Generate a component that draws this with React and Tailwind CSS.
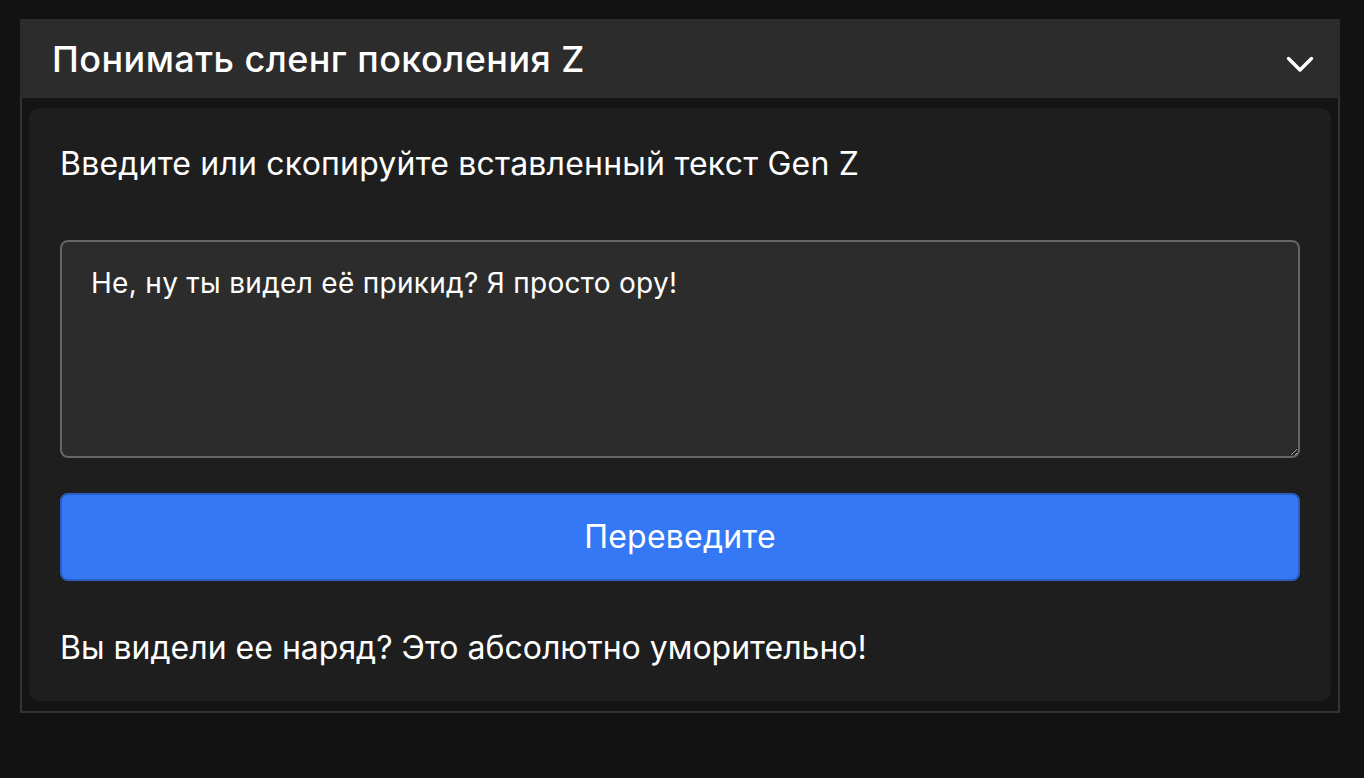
import { useState } from "react"

const font = { fontFamily: "Inter, 'Noto Sans', sans-serif" }

export default function App() {
  const [text, setText] = useState("Не, ну ты видел её прикид? Я просто ору!")

  return (
    <div className="min-h-[778px] bg-[#121212] pt-[19px] px-[20px]" style={font}>
      <div className="w-[1320px] border-2 border-[#333333] border-t-0 bg-[#141414]">
        {/* header */}
        <div className="h-[79px] bg-[#2c2c2c] flex items-center justify-between pl-[32px] pr-[26px] -mx-[2px]">
          <h1 className="text-[36px] font-medium text-white tracking-[0.45px]">
            Понимать сленг поколения Z
          </h1>
          <svg className="mt-[12px]" width="28" height="17" viewBox="0 0 28 17" fill="none" stroke="white" strokeWidth="3.4" strokeLinecap="round" strokeLinejoin="round">
            <path d="M2.5 2.5L14 14L25.5 2.5" />
          </svg>
        </div>

        {/* body */}
        <div className="px-[7px] pt-[10px] pb-[10px]">
          <div className="bg-[#1e1e1e] rounded-[10px] px-[31px] pt-[32px] pb-[29px] flex flex-col">
            <label className="text-[32px] text-white leading-[48px] tracking-[0.2px]">
              Введите или скопируйте вставленный текст Gen Z
            </label>
            <textarea
              value={text}
              onChange={(e) => setText(e.target.value)}
              className="mt-[52px] h-[218px] w-full bg-[#2c2c2c] border-2 border-[#666666] rounded-[8px] pl-[29px] pr-[20px] pt-[23px] text-[28px] leading-[36px] tracking-[0.3px] text-white outline-none resize-y"
              style={font}
            />
            <button
              className="mt-[35px] h-[88px] w-full bg-[#3478f6] border-2 border-[#2a5fc4] rounded-[8px] text-[32px] tracking-[0.2px] text-white"
              style={font}
            >
              Переведите
            </button>
            <p className="mt-[43px] text-[32px] text-white leading-[48px]">
              Вы видели ее наряд? Это абсолютно уморительно!
            </p>
          </div>
        </div>
      </div>
    </div>
  )
}
